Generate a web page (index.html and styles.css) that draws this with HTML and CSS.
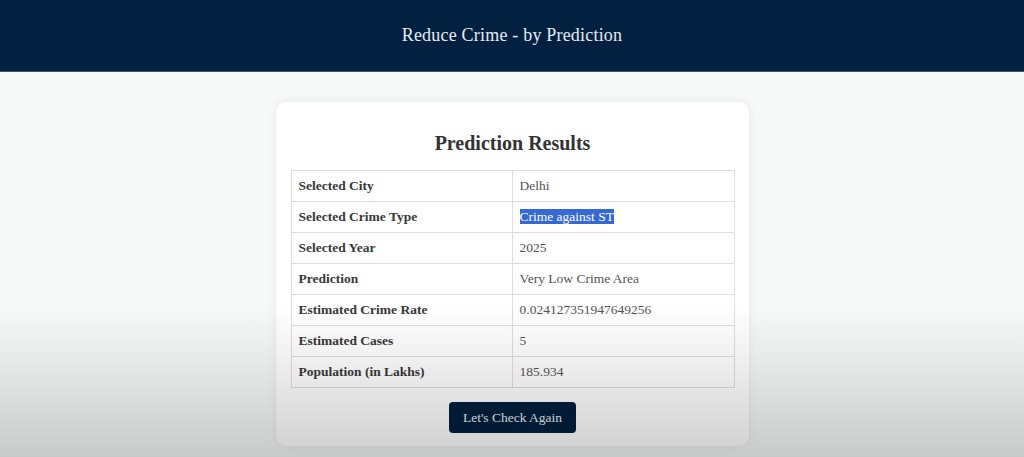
FILE: index.html
```html
<!DOCTYPE html>
<html lang="en">
<head>
<meta charset="utf-8">
<title>Reduce Crime - by Prediction</title>
<link rel="stylesheet" href="styles.css">
</head>
<body>
<header class="topbar">
  <h1 class="brand">Reduce Crime - by Prediction</h1>
</header>
<main class="page">
  <section class="card">
    <h2 class="card-title">Prediction Results</h2>
    <table class="results">
      <tr><th>Selected City</th><td>Delhi</td></tr>
      <tr><th>Selected Crime Type</th><td><span class="selected">Crime against ST</span></td></tr>
      <tr><th>Selected Year</th><td>2025</td></tr>
      <tr><th>Prediction</th><td>Very Low Crime Area</td></tr>
      <tr><th>Estimated Crime Rate</th><td>0.024127351947649256</td></tr>
      <tr><th>Estimated Cases</th><td>5</td></tr>
      <tr><th>Population (in Lakhs)</th><td>185.934</td></tr>
    </table>
    <div class="actions">
      <button class="btn" type="button">Let's Check Again</button>
    </div>
  </section>
</main>
<div class="shade"></div>
</body>
</html>
```
FILE: styles.css
```css
* { box-sizing: border-box; }
html, body { margin: 0; padding: 0; }
body {
  font-family: "Liberation Serif", "Times New Roman", serif;
  background: #f7f9f9;
  color: #333;
  height: 457px;
  overflow: hidden;
  position: relative;
}
.topbar {
  height: 72px;
  background: #022140;
  border-bottom: 1px solid #3a5570;
  display: flex;
  align-items: center;
  justify-content: center;
}
.brand {
  margin: 0;
  font-size: 18px;
  font-weight: normal;
  color: #e6ecf0;
  letter-spacing: 0.2px;
}
.page {
  display: flex;
  justify-content: center;
  padding-top: 30px;
}
.card {
  width: 473px;
  background: #fff;
  border-radius: 10px;
  box-shadow: 0 0 8px rgba(0,0,0,0.08);
  padding: 28px 14px 13px 15px;
}
.card-title {
  margin: 0 0 14px;
  text-align: center;
  font-size: 20px;
  font-weight: bold;
  color: #333;
  line-height: 26px;
}
.results {
  width: 444px;
  border-collapse: collapse;
  font-size: 13.5px;
}
.results th, .results td {
  border: 1px solid #dedede;
  height: 31px;
  padding: 0 7px;
  text-align: left;
  vertical-align: middle;
}
.results th {
  width: 221px;
  font-weight: bold;
  color: #383838;
}
.results td { color: #555; }
.selected {
  background: #3568d4;
  color: #fff;
}
.actions {
  display: flex;
  justify-content: center;
  padding-top: 14px;
}
.btn {
  font-family: inherit;
  font-size: 13.5px;
  color: #e8edf1;
  background: #021f3d;
  border: none;
  border-radius: 4px;
  width: 127px;
  height: 31px;
  padding: 0;
}
.shade {
  position: absolute;
  left: 0; right: 0;
  top: 305px; bottom: 0;
  pointer-events: none;
  background: linear-gradient(to bottom, rgba(0,0,0,0) 0%, rgba(0,0,0,0.05) 30%, rgba(0,0,0,0.19) 100%);
}
```
